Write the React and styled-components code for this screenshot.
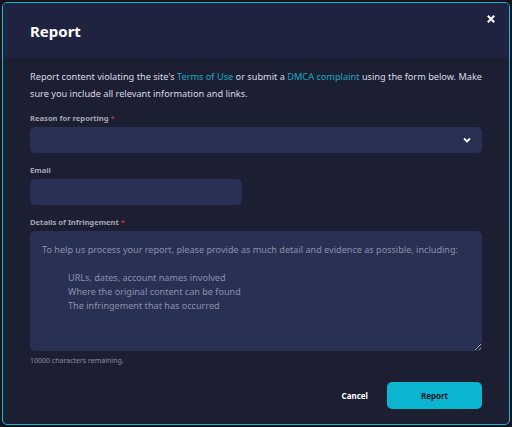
import React from "react";
import styled, { createGlobalStyle } from "styled-components";

const GlobalStyle = createGlobalStyle`
  * { box-sizing: border-box; }
  html, body {
    margin: 0;
    padding: 0;
    background: #14151e;
    font-family: "Noto Sans", "Liberation Sans", sans-serif;
  }
`;

const Overlay = styled.div`
  width: 512px;
  height: 427px;
  padding: 2px;
`;

const Modal = styled.div`
  width: 508px;
  height: 423px;
  border: 1px solid #13b8d3;
  border-radius: 5px;
  background: #1b1f31;
  overflow: hidden;
  display: flex;
  flex-direction: column;
`;

const Header = styled.div`
  height: 55px;
  background: #1f2340;
  display: flex;
  align-items: center;
  padding: 0 13px 0 27px;
  position: relative;
`;

const Title = styled.h2`
  margin: 0;
  font-size: 15px;
  font-weight: 700;
  color: #ffffff;
`;

const Close = styled.button`
  position: absolute;
  top: 11px;
  right: 13px;
  background: none;
  border: none;
  padding: 0;
  width: 10px;
  height: 10px;
  display: flex;
  cursor: pointer;
`;

const Body = styled.div`
  flex: 1;
  padding: 10px 27px 15px 27px;
  display: flex;
  flex-direction: column;
`;

const Desc = styled.p`
  margin: 0;
  font-size: 9.2px;
  line-height: 17px;
  color: #d9dbe4;
  a {
    color: #16a9c2;
    text-decoration: none;
  }
`;

const Field = styled.div`
  margin-top: ${(p) => p.$gap}px;
  display: flex;
  flex-direction: column;
`;

const Label = styled.label`
  font-size: 7.6px;
  font-weight: 700;
  line-height: 12px;
  color: #a4a7b6;
  margin-bottom: 3px;
  span {
    color: #c2323f;
  }
`;

const Select = styled.div`
  height: 26px;
  border-radius: 5px;
  background: #283053;
  display: flex;
  align-items: center;
  justify-content: flex-end;
  padding-right: 11px;
`;

const Input = styled.input`
  width: 212px;
  height: 26px;
  border: none;
  border-radius: 5px;
  background: #283053;
  outline: none;
`;

const TextArea = styled.textarea`
  height: 120px;
  border: none;
  border-radius: 5px;
  background: #283053;
  padding: 12px 12px;
  font-family: inherit;
  font-size: 9.1px;
  line-height: 14px;
  color: #d9dbe4;
  outline: none;
  &::placeholder {
    color: #8c91aa;
  }
`;

const Counter = styled.div`
  margin-top: 5px;
  font-size: 7px;
  line-height: 10px;
  color: #8a8ea0;
`;

const Actions = styled.div`
  margin-top: auto;
  display: flex;
  justify-content: flex-end;
  align-items: center;
  gap: 19px;
`;

const TextButton = styled.button`
  background: none;
  border: none;
  padding: 0;
  color: #ffffff;
  font-family: inherit;
  font-size: 8px;
  font-weight: 700;
  height: 27px;
  cursor: pointer;
`;

const PrimaryButton = styled.button`
  width: 95px;
  height: 27px;
  border: none;
  border-radius: 5px;
  background: #0ab5cf;
  color: #13192b;
  font-family: inherit;
  font-size: 8px;
  font-weight: 700;
  cursor: pointer;
`;

const indent = "           ";
const placeholder =
  "To help us process your report, please provide as much detail and evidence as possible, including:\n\n" +
  indent + "URLs, dates, account names involved\n" +
  indent + "Where the original content can be found\n" +
  indent + "The infringement that has occurred";

export default function App() {
  return (
    <>
      <GlobalStyle />
      <Overlay>
        <Modal>
          <Header>
            <Title>Report</Title>
            <Close aria-label="Close">
              <svg width="10" height="10" viewBox="0 0 10 10">
                <path d="M2.5 2.5 L7.5 7.5 M7.5 2.5 L2.5 7.5" stroke="#fff" strokeWidth="2" strokeLinecap="square" />
              </svg>
            </Close>
          </Header>
          <Body>
            <Desc>
              Report content violating the site's <a href="#">Terms of Use</a> or submit a{" "}
              <a href="#">DMCA complaint</a> using the form below. Make sure you include all
              relevant information and links.
            </Desc>
            <Field $gap={10}>
              <Label>
                Reason for reporting <span>*</span>
              </Label>
              <Select>
                <svg width="8" height="6" viewBox="0 0 8 6">
                  <path d="M1 1.5 L4 4.5 L7 1.5" stroke="#fff" strokeWidth="1.8" fill="none" />
                </svg>
              </Select>
            </Field>
            <Field $gap={11}>
              <Label>Email</Label>
              <Input />
            </Field>
            <Field $gap={11}>
              <Label>
                Details of Infringement <span>*</span>
              </Label>
              <TextArea placeholder={placeholder} />
            </Field>
            <Counter>10000 characters remaining.</Counter>
            <Actions>
              <TextButton>Cancel</TextButton>
              <PrimaryButton>Report</PrimaryButton>
            </Actions>
          </Body>
        </Modal>
      </Overlay>
    </>
  );
}
